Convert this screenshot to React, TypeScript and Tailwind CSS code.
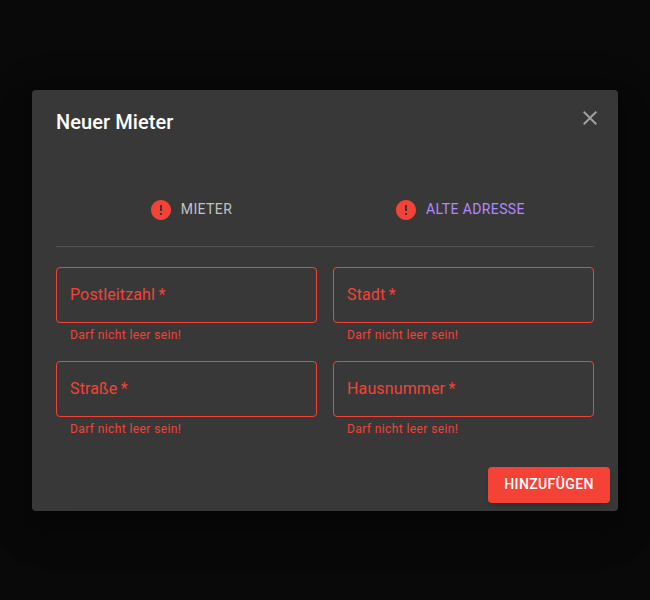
function ErrorIcon() {
  return (
    <svg viewBox="0 0 24 24" className="size-6 shrink-0 fill-[#f44336]">
      <path d="M12 2C6.48 2 2 6.48 2 12s4.48 10 10 10 10-4.48 10-10S17.52 2 12 2zm1 15h-2v-2h2v2zm0-4h-2V7h2v6z" />
    </svg>
  );
}

function Field({ label }: { label: string }) {
  return (
    <div>
      <div className="flex h-14 items-center rounded border border-[#f44336] px-[13px] text-base tracking-[0.13px] text-[#f44336]">
        <span className="pb-0.5 leading-[23px]">{label}{"\u2009*"}</span>
      </div>
      <p className="mt-[2px] mb-px ml-3.5 text-xs leading-[20px] tracking-[0.4px] text-[#f44336]">Darf nicht leer sein!</p>
    </div>
  );
}

export default function App() {
  return (
    <div className="h-[600px] bg-[#090909] px-8 pt-[90px] font-[Roboto,sans-serif]">
      <div className="flex h-[421px] flex-col rounded bg-[#383838] shadow-[0px_11px_15px_-7px_rgba(0,0,0,0.2),0px_24px_38px_3px_rgba(0,0,0,0.14),0px_9px_46px_8px_rgba(0,0,0,0.12)]">
        <header className="flex h-16 justify-between pt-4 pr-4 pl-6">
          <h2 className="text-xl leading-8 font-medium tracking-[0.07px] text-white">Neuer Mieter</h2>
          <svg viewBox="0 0 24 24" className="size-6 fill-[#9f9f9f]">
            <path d="M19 6.41L17.59 5 12 10.59 6.41 5 5 6.41 10.59 12 5 17.59 6.41 19 12 13.41 17.59 19 19 17.59 13.41 12z" />
          </svg>
        </header>
        <main className="px-6 pt-[20px]">
          <nav className="flex h-[73px] items-center border-b border-[#535353] text-sm tracking-[0.4px]">
            <div className="flex flex-1 items-center justify-center gap-2 text-[#c3c3c3]"><ErrorIcon /><span className="pb-0.5">MIETER</span></div>
            <div className="flex flex-1 items-center justify-center gap-2 text-[#b388ff]"><ErrorIcon /><span className="pb-0.5">ALTE ADRESSE</span></div>
          </nav>
          <div className="mt-5 grid grid-cols-2 gap-x-4 gap-y-[15px]">
            <Field label="Postleitzahl" />
            <Field label="Stadt" />
            <Field label="Straße" />
            <Field label="Hausnummer" />
          </div>
        </main>
        <footer className="mt-auto flex justify-end p-2">
          <button className="h-9 w-[122px] rounded bg-[#f44336] pb-0.5 text-sm font-medium tracking-[0.38px] text-white shadow-md">HINZUFÜGEN</button>
        </footer>
      </div>
    </div>
  );
}
